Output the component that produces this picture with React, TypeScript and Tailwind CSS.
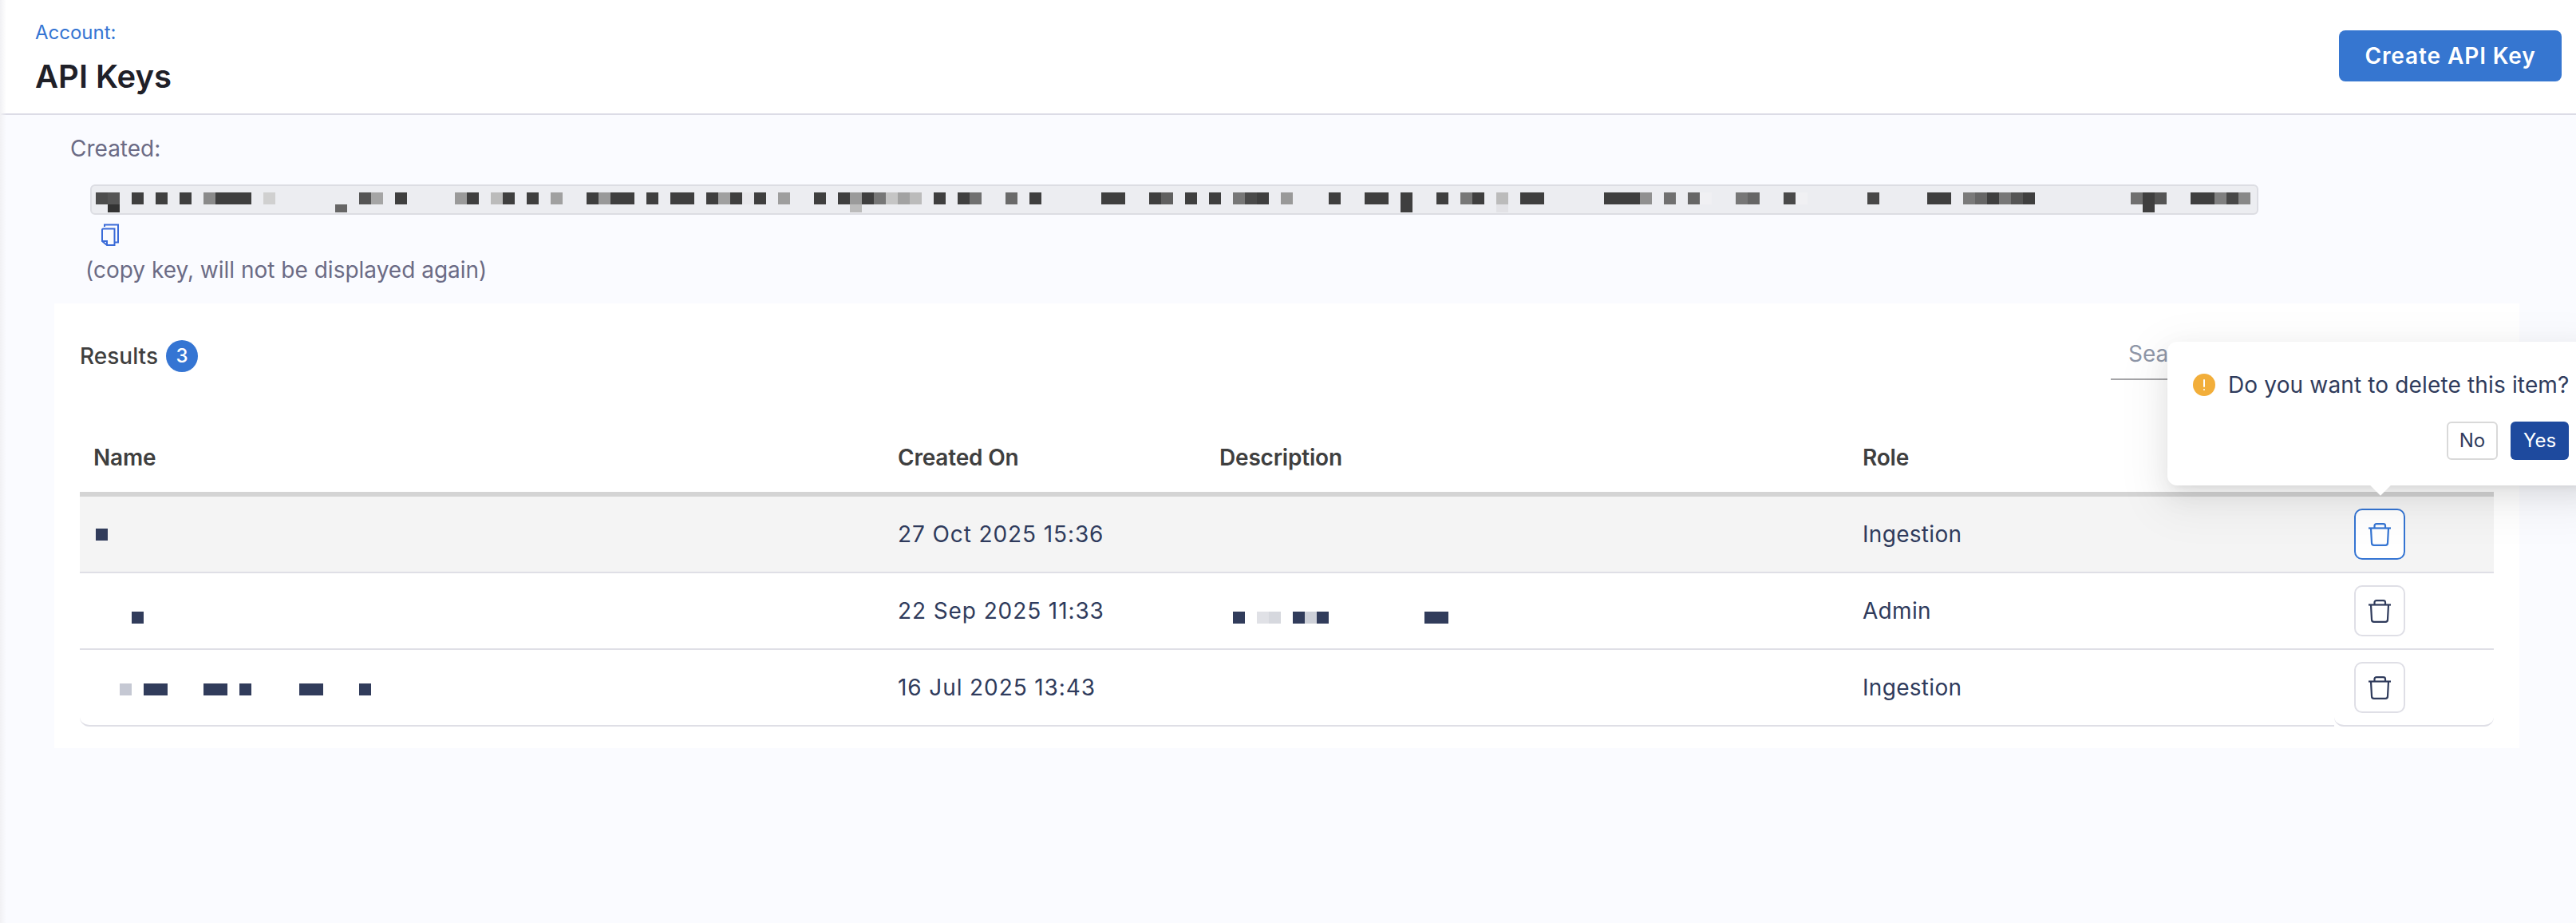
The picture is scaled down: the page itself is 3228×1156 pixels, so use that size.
const INK = "#3f3f3f"
const NAVY = "#313c5b"
const FAINT = "#f0f0f3"

type Block = [number, number, string, number?]

const keyBlocks: Block[] = [
  [120, 15, "#4d4d4d"], [135, 15, "#555555"], [135, 15, "#333333", 15], [165, 15, INK], [195, 15, INK], [225, 15, INK],
  [255, 15, "#8a8a8a"], [270, 45, INK], [330, 15, "#d0d0d0"], [420, 15, "#666666", 15], [450, 15, "#555555"],
  [465, 15, "#a5a5a5"], [495, 15, INK], [570, 15, "#9a9a9a"], [585, 15, INK], [615, 15, "#bbbbbb"], [630, 15, INK],
  [660, 15, INK], [690, 15, "#a0a0a0"], [735, 15, INK], [750, 15, "#999999"], [765, 30, INK],
  [810, 15, INK], [840, 30, INK], [885, 15, INK], [900, 15, "#a0a0a0"], [915, 15, INK], [930, 15, "#e8e8ec"],
  [945, 15, INK], [975, 15, "#9e9e9e"], [1020, 15, INK], [1050, 15, INK], [1065, 15, "#9a9a9a"],
  [1065, 15, "#bbbbbb", 15], [1080, 15, INK], [1095, 15, "#777777"], [1110, 15, "#c5c5c5"], [1125, 15, "#a2a2a2"],
  [1140, 15, "#bbbbbb"], [1170, 15, INK], [1200, 15, INK], [1215, 15, "#707070"], [1260, 15, "#6a6a6a"],
  [1290, 15, INK], [1380, 30, INK], [1440, 15, INK], [1455, 15, "#606060"], [1485, 15, INK], [1515, 15, INK],
  [1545, 15, "#777777"], [1560, 15, "#4a4a4a"], [1575, 15, INK], [1605, 15, "#999999"], [1665, 15, INK],
  [1710, 30, INK], [1755, 15, INK], [1755, 15, INK, 15], [1800, 15, INK], [1830, 15, "#777777"], [1845, 15, INK],
  [1875, 15, "#bbbbbb"], [1875, 15, "#e2e2e6", 15], [1905, 30, INK], [2010, 45, INK], [2055, 15, "#909090"],
  [2085, 15, "#707070"], [2115, 15, "#666666"], [2130, 15, FAINT], [2175, 15, "#777777"], [2190, 15, "#666666"],
  [2235, 15, "#4a4a4a"], [2250, 15, FAINT], [2340, 15, "#484848"], [2415, 30, INK], [2460, 15, "#7a7a7a"],
  [2475, 15, "#666666"], [2490, 15, INK], [2505, 15, "#777777"], [2520, 15, "#555555"], [2535, 15, INK],
  [2670, 15, "#707070"], [2685, 15, INK], [2685, 15, INK, 15], [2700, 15, "#555555"], [2745, 30, INK],
  [2775, 15, "#808080"], [2790, 15, "#484848"], [2805, 15, "#888888"],
]

function Mosaic({ blocks, x0, width, height = 15, className }: { blocks: Block[]; x0: number; width: number; height?: number; className?: string }) {
  return (
    <svg width={width} height={height} className={className} shapeRendering="crispEdges">
      {blocks.map((b, i) => (
        <rect key={i} x={b[0] - x0} y={b[3] ?? 0} width={b[1]} height={b[3] ? 10 : 15} fill={b[2]} />
      ))}
    </svg>
  )
}

function TrashIcon({ className }: { className?: string }) {
  return (
    <svg width="28" height="29" viewBox="0 0 28 29" fill="none" stroke="currentColor" strokeWidth="2.2" className={className}>
      <path d="M0 6.5H28" />
      <path d="M7.5 6V3.5C7.5 2 8.5 1.2 10 1.2H18.5C20 1.2 21 2 21 3.5V6" />
      <path d="M3 6.5L4 25C4 26.8 5 27.8 6.8 27.8H21.2C23 27.8 24 26.8 24 25L25 6.5" />
    </svg>
  )
}

function CopyIcon() {
  return (
    <svg width="22" height="28" viewBox="0 0 22 28" fill="none" stroke="#3a6bd8" strokeWidth="2">
      <path d="M4 4V1.5H21V23.5H17" />
      <path d="M1 8C1 7 1.5 6.5 2.5 6.5H16.5V27H7L1 22Z" />
      <path d="M1 22H7V27" />
    </svg>
  )
}

function WarningIcon() {
  return (
    <svg width="28" height="28" viewBox="0 0 28 28">
      <circle cx="14" cy="14" r="14" fill="#f2ae3a" />
      <rect x="13" y="7" width="2" height="10" rx="1" fill="#fff" />
      <rect x="13" y="19" width="2" height="2" rx="1" fill="#fff" />
    </svg>
  )
}

const rows = [
  {
    name: [[120, 15, NAVY]] as Block[],
    nameClass: "",
    created: "27 Oct 2025 15:36",
    description: null as Block[] | null,
    role: "Ingestion",
  },
  {
    name: [[165, 15, NAVY]] as Block[],
    nameClass: "mt-[17px]",
    created: "22 Sep 2025 11:33",
    description: [
      [1545, 15, NAVY], [1575, 15, "#e0e1e6"], [1590, 15, "#d6d8de"], [1620, 15, NAVY],
      [1635, 15, "#cdd0d8"], [1650, 15, NAVY], [1785, 30, NAVY],
    ] as Block[],
    role: "Admin",
  },
  {
    name: [
      [150, 15, "#c5c8d3"], [180, 30, NAVY], [255, 30, NAVY], [300, 15, NAVY], [375, 30, NAVY], [450, 15, NAVY],
    ] as Block[],
    nameClass: "mt-[5px]",
    created: "16 Jul 2025 13:43",
    description: null,
    role: "Ingestion",
  },
]

export default function App() {
  return (
    <div className="relative h-[1156px] overflow-hidden bg-[#fafbff] font-['Inter',sans-serif] text-[28px] text-[#2f3b5c]">
      <header className="flex h-[144px] items-center justify-between border-b-2 border-[#dcdce6] bg-white pl-[44px] pr-[18px]">
        <div className="mt-[4px]">
          <div className="flex h-[30px] items-center text-[24px] leading-[30px] text-[#3575d3]">Account:</div>
          <h1 className="mt-[16px] text-[40px] font-semibold leading-[48px] text-[#1f2028]">API Keys</h1>
        </div>
        <button className="-mt-[2px] h-[64px] w-[279px] rounded-[8px] bg-[#3676d0] text-[28px] font-semibold tracking-[0.9px] text-white">
          Create API Key
        </button>
      </header>

      <div className="pl-[88px] pt-[25px] leading-[34px] text-[#6b6b85]">Created:</div>
      <div className="ml-[113px] mt-[28px] h-[38px] w-[2717px] rounded-[6px] border-2 border-[#dcdde3] bg-[#ecedf1] pt-[8px]">
        <Mosaic blocks={keyBlocks} x0={115} width={2713} height={25} className="block" />
      </div>
      <div className="ml-[127px] mt-[11px]">
        <CopyIcon />
      </div>
      <div className="pl-[107px] pt-[13px] leading-[34px] text-[#6b6b85]">(copy key, will not be displayed again)</div>

      <section className="ml-[68px] mt-[25px] h-[557px] w-[3089px] bg-white px-[32px] pt-[46px]">
        <div className="flex h-[40px] items-start justify-between">
          <div className="flex items-center gap-[10px] font-medium leading-[36px] text-[#3f3f3f]">
            Results
            <span className="flex size-[40px] items-center justify-center rounded-full bg-[#3575d3] text-[24px] text-white">3</span>
          </div>
          <div className="h-[50px] w-[480px] border-b-2 border-[#a5a5a8] pl-[22px] leading-[34px] text-[#8f97a8]">Search</div>
        </div>

        <div className="grid grid-cols-[1025px_403px_806px_1fr] border-b-[6px] border-[#d4d4d4] pb-[26px] pt-[90px] font-semibold leading-[34px] tracking-[-0.2px] text-[#3f3f3f]">
          <div className="pl-[17px]">Name</div>
          <div>Created On</div>
          <div>Description</div>
          <div>Role</div>
        </div>

        {rows.map((row, i) => {
          const last = i === rows.length - 1
          return (
            <div key={row.created} className={`flex h-[96px] tracking-[0.3px] ${i === 0 ? "bg-[#f4f4f4]" : ""}`}>
              <div className={`grid flex-1 grid-cols-[1025px_403px_806px_1fr] items-center border-b-2 border-[#dfdfe6] ${last ? "rounded-bl-[12px]" : ""}`}>
                <Mosaic blocks={row.name} x0={100} width={400} className={row.nameClass} />
                <div className="tracking-[0.9px]">{row.created}</div>
                <div>{row.description && <Mosaic blocks={row.description} x0={1528} width={400} className="mt-[17px]" />}</div>
                <div>{row.role}</div>
              </div>
              <div className={`w-[200px] border-b-2 border-[#dfdfe6] pl-[25px] pt-[15px] ${last ? "rounded-b-[12px]" : ""}`}>
                <button
                  className={`flex size-[64px] items-center justify-center rounded-[10px] border-2 bg-white ${
                    i === 0 ? "border-[#3575d3] text-[#3575d3]" : "border-[#dfdfe6] text-[#2f3b5c]"
                  }`}
                >
                  <TrashIcon />
                </button>
              </div>
            </div>
          )
        })}
      </section>

      <div className="absolute inset-y-0 left-0 w-[8px] bg-gradient-to-r from-[#f1f1f4] to-transparent" />

      <div className="absolute left-[2716px] top-[428px] h-[180px] w-[540px] rounded-[12px] bg-white shadow-[0_12px_32px_0_rgba(0,0,0,0.08),0_6px_12px_-8px_rgba(0,0,0,0.12),0_18px_56px_16px_rgba(0,0,0,0.05)]">
        <div className="absolute left-[258px] top-[171px] size-[18px] rotate-45 bg-white" />
        <div className="relative flex items-center gap-[16px] pl-[32px] pt-[40px]">
          <WarningIcon />
          <span className="leading-[28px] tracking-[0.15px]">Do you want to delete this item?</span>
        </div>
        <div className="relative mt-[32px] flex gap-[16px] pl-[350px] text-[24px]">
          <button className="h-[48px] w-[64px] rounded-[6px] border-2 border-[#d9d9d9] bg-white">No</button>
          <button className="h-[48px] w-[73px] rounded-[6px] bg-[#1e4a9e] text-white">Yes</button>
        </div>
      </div>
    </div>
  )
}
